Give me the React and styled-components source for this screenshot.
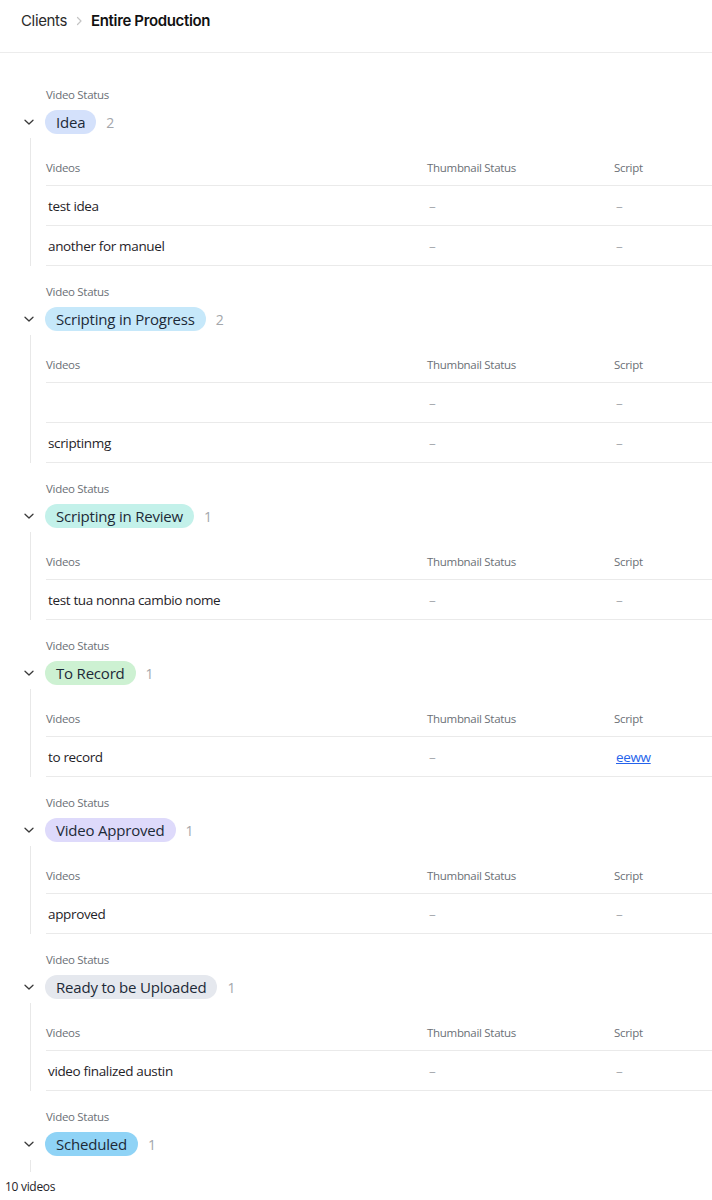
import React from 'react';
import styled, { createGlobalStyle } from 'styled-components';

const GlobalStyle = createGlobalStyle`
  html, body { margin: 0; padding: 0; background: #ffffff; }
  body { font-family: 'Open Sans', 'Noto Sans', sans-serif; color: #1f2328; overflow: hidden; }
  * { box-sizing: border-box; }
`;

const Page = styled.div`
  height: 100vh;
  display: flex;
  flex-direction: column;
`;

const Header = styled.header`
  height: 53px;
  flex-shrink: 0;
  display: flex;
  align-items: flex-start;
  gap: 8px;
  padding: 11px 21px 0;
  border-bottom: 1px solid #ececec;
  font-family: 'Inter', 'Liberation Sans', sans-serif;
  font-size: 15px;
  line-height: 20px;
  letter-spacing: -0.35px;
`;

const Crumb = styled.span`
  color: ${({ current }) => (current ? '#111111' : '#2b2b2b')};
  font-weight: ${({ current }) => (current ? 600 : 400)};
`;

const Sep = styled.span`
  display: flex;
  align-items: center;
  height: 20px;
  color: #c4c4c4;
`;

const Scroll = styled.main`
  flex: 1;
  overflow: hidden;
  padding-top: 34px;
`;

const Group = styled.section`
  margin-bottom: 18px;
`;

const StatusLabel = styled.div`
  padding-left: 46px;
  font-size: 11.5px;
  line-height: 16px;
  letter-spacing: -0.3px;
  color: #6b6f76;
`;

const GroupHead = styled.div`
  margin-top: 5px;
  height: 28px;
  display: flex;
  align-items: center;
  gap: 10px;
  padding-left: 23px;
`;

const Chevron = styled.svg`
  width: 12px;
  height: 12px;
  color: #3a3a3a;
  flex-shrink: 0;
`;

const Pill = styled.span`
  display: inline-flex;
  align-items: center;
  height: 24px;
  padding: 0 11px;
  border-radius: 12px;
  background: ${({ bg }) => bg};
  color: #1d2a38;
  font-size: 15px;
  letter-spacing: -0.2px;
  line-height: 24px;
  white-space: nowrap;
`;

const Count = styled.span`
  font-size: 14px;
  color: #a3a6ab;
`;

const GroupBody = styled.div`
  margin-top: 2px;
  margin-left: 30px;
  min-height: 40px;
  border-left: 1px solid #e8e8e8;
  padding: 12px 0 0 15px;
`;

const Row = styled.div`
  display: grid;
  grid-template-columns: 381px 187px 1fr;
  border-bottom: 1px solid #eaeaea;
  padding: 10px 0 9px;
`;

const HeadCell = styled.div`
  font-size: 11.5px;
  line-height: 16px;
  letter-spacing: -0.3px;
  color: #6b6f76;
`;

const Cell = styled.div`
  padding-left: 2px;
  font-size: 13.5px;
  line-height: 20px;
  letter-spacing: -0.35px;
  color: ${({ muted }) => (muted ? '#a9abb0' : '#1f2328')};
  white-space: nowrap;
`;

const Link = styled.a`
  color: #2563eb;
  text-decoration: underline;
`;

const Footer = styled.footer`
  height: 28px;
  flex-shrink: 0;
  display: flex;
  align-items: center;
  padding-left: 5px;
  font-size: 12px;
  letter-spacing: -0.3px;
  color: #1f2328;
  background: #ffffff;
`;

const groups = [
  { name: 'Idea', bg: '#d4e1fb', rows: [{ title: 'test idea' }, { title: 'another for manuel' }] },
  { name: 'Scripting in Progress', bg: '#c6e8fa', rows: [{ title: '' }, { title: 'scriptinmg' }] },
  { name: 'Scripting in Review', bg: '#c3f1ea', rows: [{ title: 'test tua nonna cambio nome' }] },
  { name: 'To Record', bg: '#cdf1d2', rows: [{ title: 'to record', script: 'eeww' }] },
  { name: 'Video Approved', bg: '#dedafb', rows: [{ title: 'approved' }] },
  { name: 'Ready to be Uploaded', bg: '#e5e8ee', rows: [{ title: 'video finalized austin' }] },
  // the last group's table sits below the fold, under the footer
  { name: 'Scheduled', bg: '#8fd3f6', count: 1, rows: [], folded: true },
];

const Down = () => (
  <Chevron viewBox="0 0 12 12" fill="none">
    <path d="M2 4.2 L6 8 L10 4.2" stroke="currentColor" strokeWidth="1.3" strokeLinecap="round" strokeLinejoin="round" />
  </Chevron>
);

const StatusGroup = ({ group }) => (
  <Group>
    <StatusLabel>Video Status</StatusLabel>
    <GroupHead>
      <Down />
      <Pill bg={group.bg}>{group.name}</Pill>
      <Count>{group.count ?? group.rows.length}</Count>
    </GroupHead>
    <GroupBody>
      {!group.folded && (
        <Row>
          <HeadCell>Videos</HeadCell>
          <HeadCell>Thumbnail Status</HeadCell>
          <HeadCell>Script</HeadCell>
        </Row>
      )}
      {group.rows.map((r, i) => (
        <Row key={i}>
          <Cell>{r.title}</Cell>
          <Cell muted>–</Cell>
          {r.script ? (
            <Cell>
              <Link href="#">{r.script}</Link>
            </Cell>
          ) : (
            <Cell muted>–</Cell>
          )}
        </Row>
      ))}
    </GroupBody>
  </Group>
);

export default function App() {
  return (
    <Page>
      <GlobalStyle />
      <Header>
        <Crumb>Clients</Crumb>
        <Sep>
          <svg width="8" height="10" viewBox="0 0 8 10" fill="none">
            <path d="M2.5 1.5 L6 5 L2.5 8.5" stroke="currentColor" strokeWidth="1.2" strokeLinecap="round" strokeLinejoin="round" />
          </svg>
        </Sep>
        <Crumb current>Entire Production</Crumb>
      </Header>
      <Scroll>
        {groups.map((g) => (
          <StatusGroup key={g.name} group={g} />
        ))}
      </Scroll>
      <Footer>10 videos</Footer>
    </Page>
  );
}
